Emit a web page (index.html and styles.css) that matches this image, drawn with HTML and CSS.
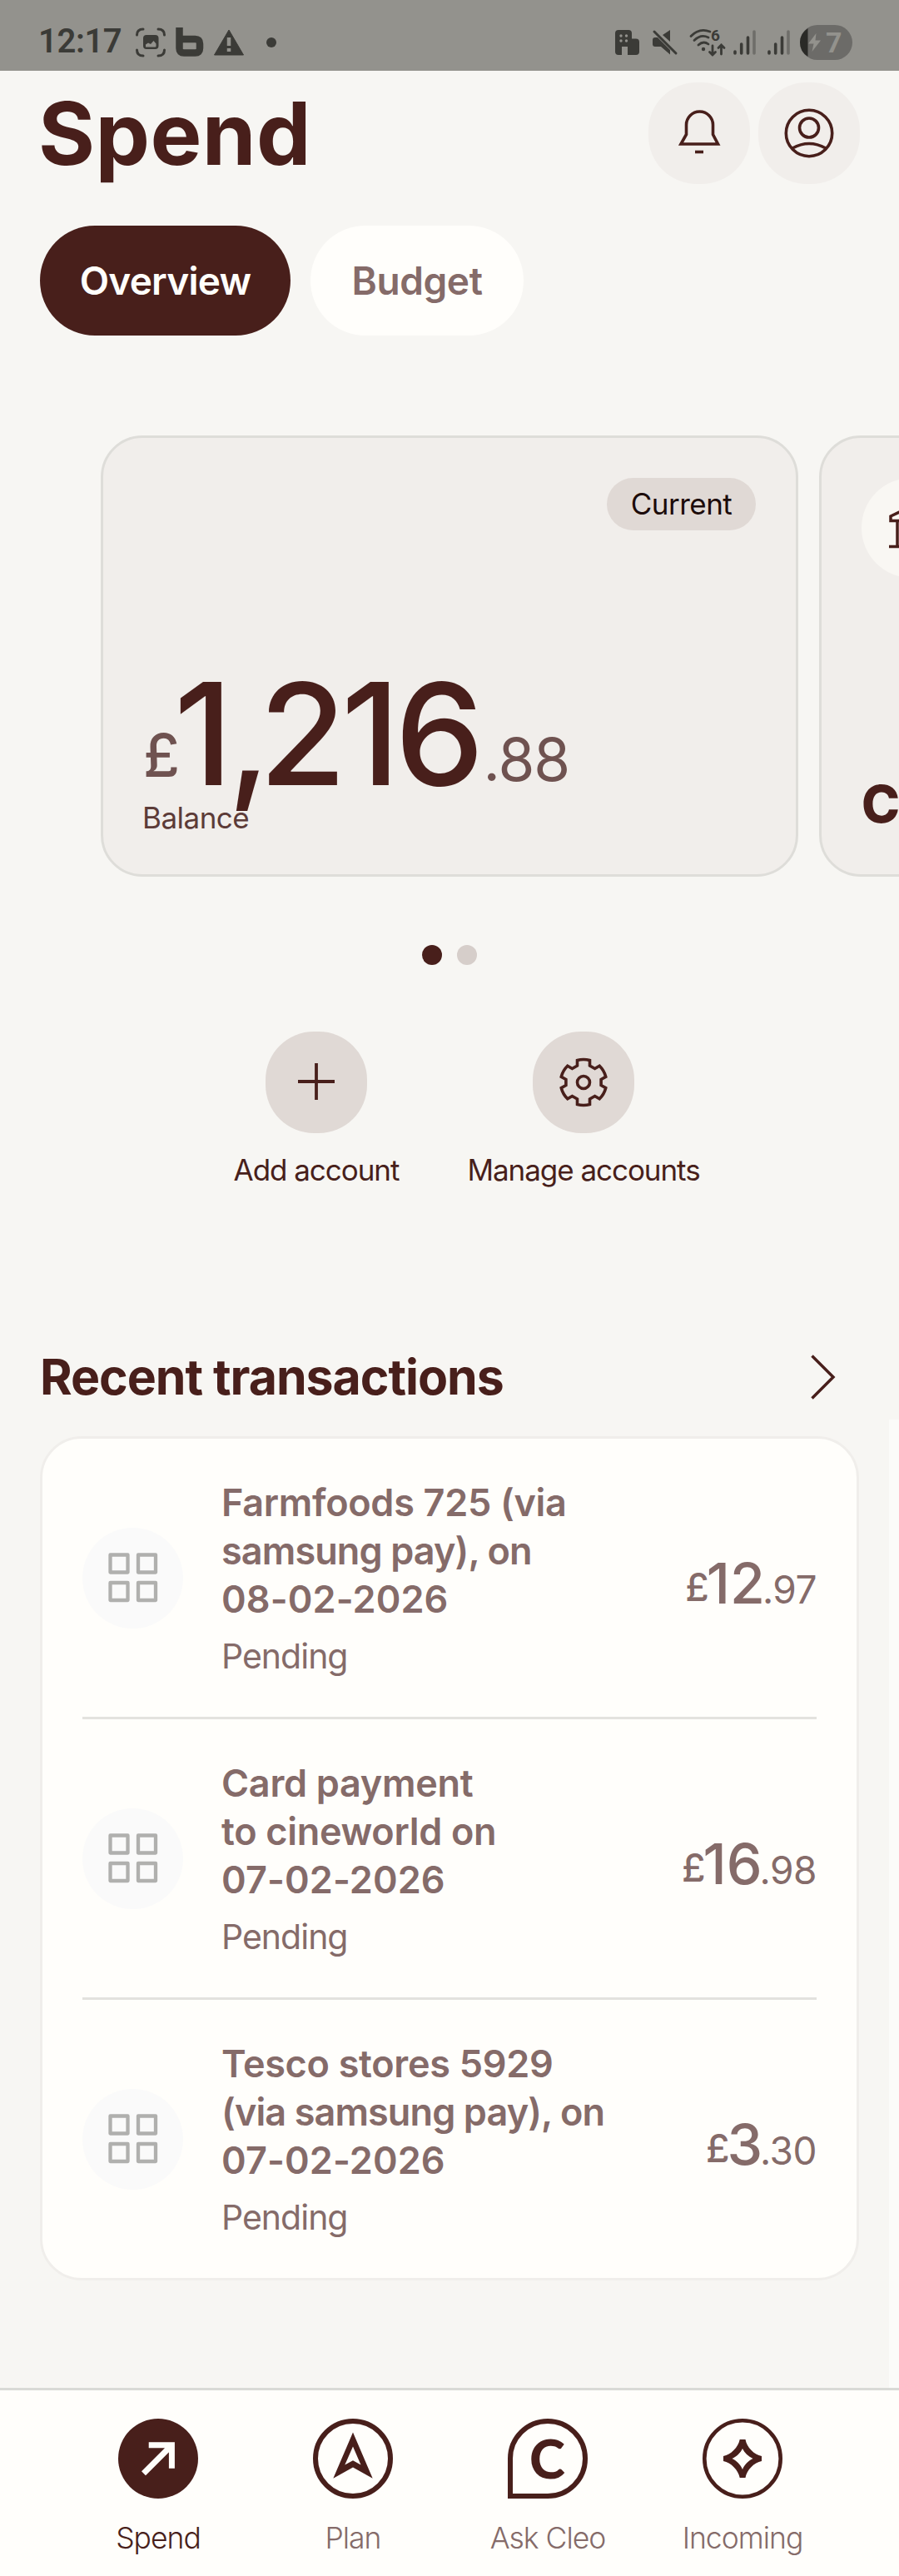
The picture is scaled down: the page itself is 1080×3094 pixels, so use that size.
FILE: index.html
```html
<!DOCTYPE html>
<html lang="en">
  <head>
    <meta charset="utf-8">
    <title>Spend</title>
    <link rel="stylesheet" href="styles.css">
  </head>
  <body>
    <div class="statusbar">
      <div class="status-left">
        <span class="clock">12:17</span>
        <svg class="capture" width="36" height="36" viewBox="0 0 36 36" fill="none" stroke="currentColor" stroke-width="3" stroke-linecap="round">
          <path d="M1.5 9Q1.5 2 9 2M27 2Q34.500 2 34.500 9M34.500 27Q34.500 34 27 34M9 34Q1.500 34 1.500 27"/>
          <rect x="9" y="9" width="18.500" height="17" rx="4" fill="currentColor" stroke="none"/>
          <path d="M12 23.500V20.500L15 18.500L18 20L21.500 16L24.500 19.500V22.500Q24.500 23.500 23.500 23.500Z" fill="#93928d" stroke="none"/>
        </svg>
        <svg class="brand" width="34" height="36" viewBox="0 0 34 36" fill="none" stroke="currentColor" stroke-width="8.500">
          <path d="M4.500 0V25Q4.500 30.500 10 30.500H23.500Q29 30.500 29 25V19.500Q29 14 23.500 14H4.500"/>
        </svg>
        <svg class="alert" width="36" height="32" viewBox="0 0 36 32">
          <path d="M18 1L35.500 31H0.500Z" fill="currentColor" stroke="currentColor" stroke-linejoin="round"/>
          <path d="M18 10V20M18 23V27" stroke="#93928d" stroke-width="4.500"/>
        </svg>
        <span class="more"></span>
      </div>
      <div class="status-right">
        <svg class="office" width="29" height="30" viewBox="0 0 29 30">
          <path d="M4 0H16Q20 0 20 4V10.500H25Q29 10.500 29 14.500V26Q29 30 25 30H15V20H8V30H4Q0 30 0 26V4Q0 0 4 0Z" fill="currentColor"/>
          <g fill="#93928d"><circle cx="7" cy="7" r="1.700"/><circle cx="13.500" cy="7" r="1.700"/><circle cx="7" cy="13" r="1.700"/><circle cx="13.500" cy="13" r="1.700"/></g>
        </svg>
        <svg class="mute" width="30" height="30" viewBox="0 0 30 30" fill="currentColor">
          <path d="M0 12Q0 9 3 9H6L21 24V29.500L10 20H3Q0 20 0 17ZM12 6L21 0V14Z"/>
          <path d="M2 2L28 28" fill="none" stroke="currentColor" stroke-width="3" stroke-linecap="round"/>
        </svg>
        <svg class="wifi" width="44" height="34" viewBox="0 0 44 34" fill="none" stroke="currentColor" stroke-width="2.800" stroke-linecap="round">
          <path d="M2 9.500Q12 -1 25 4M6 14.500Q14 6.500 23 11M11 20Q17 14.500 23 19"/>
          <path d="M28 21V32M24.500 28.500L28 32L31.500 28.500M38.500 31V20M35 23.500L38.500 20L42 23.500"/>
          <circle cx="17" cy="25" r="2.200" fill="currentColor" stroke="none"/>
          <text x="26" y="15" font-size="19" font-weight="700" font-family="Roboto, sans-serif" fill="currentColor" stroke="none">6</text>
        </svg>
        <svg class="signal" width="28" height="30" viewBox="0 0 28 30" stroke="currentColor" stroke-width="3.600" stroke-linecap="round">
          <path d="M2 26V28M9.700 17V28M17.500 9V28"/><path d="M25 2V28" opacity=".4"/>
        </svg>
        <svg class="signal" width="28" height="30" viewBox="0 0 28 30" stroke="currentColor" stroke-width="3.600" stroke-linecap="round">
          <path d="M2 26V28M9.700 17V28M17.500 9V28"/><path d="M25 2V28" opacity=".4"/>
        </svg>
        <svg class="battery" width="63" height="42" viewBox="0 0 63 42">
          <rect width="63" height="42" rx="21" fill="#6c6b68"/>
          <path d="M9.500 4V38Q0 32 0 21Q0 10 9.500 4Z" fill="#2a2a27"/>
          <path d="M19.500 10L10 22.500H16.500L14.500 32L25 18.500H18.500Z" fill="#93928d"/>
          <text x="31" y="32.500" font-size="34" font-weight="700" font-family="Roboto, sans-serif" fill="#93928d">7</text>
        </svg>
      </div>
    </div>

    <div class="header">
      <h1>Spend</h1>
      <div class="header-buttons">
        <div class="round">
          <svg width="60" height="60" viewBox="0 0 60 60" fill="none" stroke="currentColor" stroke-width="3.600">
            <path d="M14 30V19A16 16 0 0 1 46 19V30.500L52 42H7.500L14 30.500Z" transform="translate(0.500 1)"/>
            <path d="M25 52.500H35"/>
          </svg>
        </div>
        <div class="round">
          <svg width="60" height="60" viewBox="0 0 60 60" fill="none" stroke="currentColor" stroke-width="3.600">
            <circle cx="30" cy="30" r="27.700"/><circle cx="30" cy="23.500" r="11.500"/><path d="M10 48Q30 37 50 48"/>
          </svg>
        </div>
      </div>
    </div>

    <div class="tabs">
      <div class="tab active">Overview</div>
      <div class="tab">Budget</div>
    </div>

    <div class="accounts">
      <div class="account">
        <span class="tag">Current</span>
        <div>
          <div class="balance"><span class="currency">£</span><span class="whole">1<span class="comma">,</span>216</span><span class="pence">.88</span></div>
          <div class="balance-label">Balance</div>
        </div>
      </div>
      <div class="account next">
        <div class="bank">
          <svg width="120" height="120" viewBox="0 0 120 120" fill="none" stroke="currentColor" stroke-width="3.500">
            <path d="M35 51.500V46L60 34L85 46V51.500ZM43 52V82M54 52V82M66 52V82M77 52V82M33 82.500H87"/>
          </svg>
        </div>
        <div class="next-title">Co</div>
      </div>
    </div>

    <div class="dots"><span class="dot on"></span><span class="dot"></span></div>

    <div class="actions">
      <div class="action add">
        <div class="round dark">
          <svg width="60" height="60" viewBox="-30 -30 60 60" stroke="currentColor" stroke-width="3.800"><path d="M-22 -1H22M0 -23V21"/></svg>
        </div>
        <div class="action-label">Add account</div>
      </div>
      <div class="action manage">
        <div class="round dark">
          <svg width="60" height="60" viewBox="-30 -30 60 60" fill="none" stroke="currentColor" stroke-width="3.600">
            <path d="M-7.500 -20V-26.500A27.500 27.500 0 0 1 7.500 -26.500V-20L13.600 -16.500L19.200 -19.700A27.500 27.500 0 0 1 26.700 -6.700L21.100 -3.500V3.500L26.700 6.700A27.500 27.500 0 0 1 19.200 19.700L13.600 16.500L7.500 20V26.500A27.500 27.500 0 0 1 -7.500 26.500V20L-13.600 16.500L-19.200 19.700A27.500 27.500 0 0 1 -26.700 6.700L-21.100 3.500V-3.500L-26.700 -6.700A27.500 27.500 0 0 1 -19.200 -19.700L-13.600 -16.500Z"/>
            <circle r="7.500"/>
          </svg>
        </div>
        <div class="action-label">Manage accounts</div>
      </div>
    </div>

    <div class="section-title">
      <h2>Recent transactions</h2>
      <svg width="30" height="54" viewBox="0 0 30 54" fill="none" stroke="currentColor" stroke-width="3.500"><path d="M1.500 1.500L27 27L1.500 52.500"/></svg>
    </div>

    <div class="transactions">
      <div class="transaction">
        <div class="category">
          <svg width="60" height="60" viewBox="0 0 60 60" fill="none" stroke="currentColor" stroke-width="4.300" stroke-linejoin="round">
            <path d="M2.500 2.500H23.500V23.500H2.500ZM36 2.500H57V23.500H36ZM2.500 36H23.500V57H2.500ZM36 36H57V57H36Z"/>
          </svg>
        </div>
        <div class="details">
          <div class="name">Farmfoods 725 (via<br><span class="tight">samsung pay), on</span><br><span class="date">08-02-2026</span></div>
          <div class="state">Pending</div>
        </div>
        <div class="amount"><span class="currency">£</span><span class="whole">12</span><span class="pence">.97</span></div>
      </div>
      <div class="transaction">
        <div class="category">
          <svg width="60" height="60" viewBox="0 0 60 60" fill="none" stroke="currentColor" stroke-width="4.300" stroke-linejoin="round">
            <path d="M2.500 2.500H23.500V23.500H2.500ZM36 2.500H57V23.500H36ZM2.500 36H23.500V57H2.500ZM36 36H57V57H36Z"/>
          </svg>
        </div>
        <div class="details">
          <div class="name">Card payment<br>to cineworld on<br><span class="date">07-02-2026</span></div>
          <div class="state">Pending</div>
        </div>
        <div class="amount"><span class="currency">£</span><span class="whole">16</span><span class="pence">.98</span></div>
      </div>
      <div class="transaction">
        <div class="category">
          <svg width="60" height="60" viewBox="0 0 60 60" fill="none" stroke="currentColor" stroke-width="4.300" stroke-linejoin="round">
            <path d="M2.500 2.500H23.500V23.500H2.500ZM36 2.500H57V23.500H36ZM2.500 36H23.500V57H2.500ZM36 36H57V57H36Z"/>
          </svg>
        </div>
        <div class="details">
          <div class="name">Tesco stores 5929<br><span class="tight">(via samsung pay), on</span><br><span class="date">07-02-2026</span></div>
          <div class="state">Pending</div>
        </div>
        <div class="amount"><span class="currency">£</span><span class="whole">3</span><span class="pence">.30</span></div>
      </div>
    </div>

    <div class="scrollbar"></div>

    <div class="nav">
      <div class="nav-item current">
        <svg width="96" height="96" viewBox="0 0 96 96" fill="none">
          <circle cx="48" cy="48" r="48" fill="#481f1b"/>
          <path d="M36.700 31.800H64.400V59.700M30.500 65.800L64 32.300" stroke="#fffefb" stroke-width="7"/>
        </svg>
        <span>Spend</span>
      </div>
      <div class="nav-item">
        <svg width="96" height="96" viewBox="0 0 96 96" fill="#481f1b">
          <circle cx="48" cy="48" r="45" fill="none" stroke="#481f1b" stroke-width="6"/>
          <path fill-rule="evenodd" d="M48 16.500L71.700 71.700L48 58.500L24.300 71.700ZM48 33.500L38.300 55.500L48 50.300L57.500 55.500Z"/>
        </svg>
        <span>Plan</span>
      </div>
      <div class="nav-item">
        <svg width="96" height="96" viewBox="0 0 96 96">
          <path d="M3 93V48A45 45 0 1 1 48 93Z" fill="none" stroke="#481f1b" stroke-width="6"/>
          <text x="47" y="71.500" text-anchor="middle" font-family="Lato, sans-serif" font-size="65" font-weight="900" fill="#481f1b">C</text>
        </svg>
        <span>Ask Cleo</span>
      </div>
      <div class="nav-item">
        <svg width="96" height="96" viewBox="0 0 96 96" fill="#481f1b">
          <circle cx="48" cy="48" r="45.700" fill="none" stroke="#481f1b" stroke-width="4.600"/>
          <path fill-rule="evenodd" d="M44.700 25H51.500C53 34 62 43.500 71 45V51C62 52.500 53 62 51.500 71H44.700C43 62 34 52.500 25 51V45C34 43.500 43 34 44.700 25ZM48 36C45.500 41 41 45.500 35.500 48C41 50.500 45.500 55 48 61C50.500 55 55 50.500 60.500 48C55 45.500 50.500 41 48 36Z"/>
        </svg>
        <span>Incoming</span>
      </div>
    </div>
  </body>
</html>
```
FILE: styles.css
```css
* {
    box-sizing: border-box;
}
body {
    margin: 0;
    width: 1080px;
    height: 3094px;
    overflow: hidden;
    background: #f7f6f3;
    color: #481f1b;
    font-family: Inter, "Liberation Sans", sans-serif;
    position: relative;
}
svg {
    display: block;
    flex: none;
    overflow: visible;
}

/* status bar */
.statusbar {
    height: 85px;
    padding: 17px 56px 0 46px;
    background: #93928d;
    color: #3b3b37;
    display: flex;
    justify-content: space-between;
}
.status-left,
.status-right {
    height: 68px;
    display: flex;
    align-items: center;
}
.clock {
    width: 117px;
    font: 600 40px/68px Roboto, sans-serif;
    letter-spacing: -.4px;
    padding-bottom: 3px;
}
.capture { margin-right: 12px; }
.brand { margin-right: 12px; }
.alert { margin-right: 27px; }
.more {
    width: 12px;
    height: 12px;
    border-radius: 50%;
    background: #3b3b37;
}
.office { margin-right: 16px; }
.mute { margin-right: 14px; }
.wifi { margin-right: 9px; }
.signal { margin-right: 13px; }
.signal + .battery { margin-left: -2px; }

/* header */
.header {
    padding: 14px 47px 0 48px;
    display: flex;
    justify-content: space-between;
}
h1 {
    margin: 1px 0 0;
    font-size: 104px;
    font-weight: 700;
    line-height: 121px;
    letter-spacing: .4px;
    text-indent: -2px;
}
.header-buttons {
    display: flex;
    gap: 10px;
}
.round {
    width: 122px;
    height: 122px;
    border-radius: 58px;
    background: #f1eeeb;
    display: flex;
    align-items: center;
    justify-content: center;
}
.round.dark {
    background: #e0d9d5;
}

/* tabs */
.tabs {
    margin: 50px 0 0 48px;
    display: flex;
    gap: 24px;
}
.tab {
    height: 132px;
    width: 256px;
    border-radius: 66px;
    background: #fffefb;
    color: #856b69;
    font-size: 46px;
    font-weight: 600;
    line-height: 132px;
    letter-spacing: -.4px;
    text-align: center;
}
.tab.active {
    width: 301px;
    background: #481f1b;
    color: #fffefb;
    letter-spacing: -.8px;
}

/* account cards */
.accounts {
    margin-top: 120px;
    padding-left: 121px;
    display: flex;
    gap: 25px;
    overflow: hidden;
}
.account {
    flex: none;
    width: 838px;
    height: 530px;
    padding: 48px;
    border: 3px solid #deddd9;
    border-radius: 50px;
    background: #f1eeeb;
    display: flex;
    flex-direction: column;
    justify-content: space-between;
}
.tag {
    align-self: flex-end;
    width: 179px;
    height: 63px;
    border-radius: 32px;
    background: #e0d9d5;
    color: #1c0b0a;
    font-size: 35px;
    line-height: 63px;
    letter-spacing: -.5px;
    text-align: center;
}
.balance {
    height: 162px;
    font-size: 170px;
    font-weight: 500;
    line-height: 162px;
    white-space: nowrap;
}
.balance .currency,
.balance .pence {
    font-size: 71px;
    line-height: 1;
    color: #6f5250;
}
.balance .currency {
    vertical-align: 10px;
}
.balance .whole {
    margin-left: -7px;
    letter-spacing: -6px;
}
.balance .comma {
    letter-spacing: -14px;
}
.balance .pence {
    margin-left: 5px;
    font-weight: 400;
    letter-spacing: -1px;
    vertical-align: 5px;
}
.balance-label {
    font-size: 35px;
    line-height: 40px;
    letter-spacing: -.5px;
    text-indent: -1px;
    color: #5c3b38;
}
.bank {
    width: 120px;
    height: 120px;
    border-radius: 50%;
    background: #f9f7f3;
}
.next-title {
    font-size: 62px;
    font-weight: 800;
    line-height: 72px;
    letter-spacing: -1px;
}

.dots {
    margin-top: 82px;
    display: flex;
    justify-content: center;
    gap: 18px;
}
.dot {
    width: 24px;
    height: 24px;
    border-radius: 50%;
    background: #d6ceca;
}
.dot.on {
    background: #481f1b;
}

.actions {
    margin: 80px 0 0 278px;
    display: flex;
    gap: 78px;
}
.action {
    display: flex;
    flex-direction: column;
    align-items: center;
}
.add { width: 204px; }
.manage { width: 282px; }
.action-label {
    margin-top: 20px;
    font-size: 35px;
    line-height: 48px;
    letter-spacing: -1.050px;
    white-space: nowrap;
}

/* transactions */
.section-title {
    margin: 185px 76px 0 48px;
    height: 80px;
    display: flex;
    align-items: center;
    justify-content: space-between;
}
h2 {
    margin: 0;
    font-size: 59px;
    font-weight: 700;
    line-height: 80px;
    letter-spacing: -1.050px;
}
.transactions {
    margin: 31px 48px 0;
    padding: 0 48px;
    border: 3px solid #f0eeeb;
    border-radius: 50px;
    background: #fffefb;
    color: #856b69;
}
.transaction {
    height: 337px;
    border-bottom: 3px solid #e3e2de;
    display: flex;
    align-items: center;
}
.transaction:last-child {
    height: 334px;
    border-bottom: 0;
}
.category {
    width: 121px;
    height: 121px;
    border-radius: 50%;
    background: #fafafa;
    color: #b0b0ae;
    display: flex;
    align-items: center;
    justify-content: center;
}
.details {
    flex: 1;
    padding: 4px 0 0 46px;
}
.name {
    font-size: 45px;
    font-weight: 600;
    line-height: 58px;
    letter-spacing: -.3px;
    white-space: nowrap;
}
.tight {
    letter-spacing: -.9px;
}
.date {
    letter-spacing: .1px;
}
.state {
    margin-top: 10px;
    font-size: 41px;
    line-height: 58px;
    letter-spacing: -1px;
}
.amount {
    padding-top: 12px;
    font-size: 68px;
    font-weight: 500;
    line-height: 80px;
    white-space: nowrap;
}
.amount .currency,
.amount .pence {
    font-size: 46px;
    line-height: 1;
}
.amount .currency {
    vertical-align: 3px;
}
.amount .whole {
    margin-left: -3px;
}
.amount .pence {
    margin-left: -3px;
    font-weight: 400;
    letter-spacing: -.5px;
}

.scrollbar {
    position: absolute;
    top: 1705px;
    right: 0;
    width: 12px;
    height: 1163px;
    background: #fbfbf9;
}

/* bottom navigation */
.nav {
    margin-top: 129px;
    height: 226px;
    padding: 34px 71px 0 73px;
    border-top: 3px solid #d9dad6;
    background: #fffefb;
    color: #856b69;
    display: flex;
}
.nav-item {
    width: 234px;
    display: flex;
    flex-direction: column;
    align-items: center;
    font-size: 35.500px;
    font-weight: 300;
    letter-spacing: -1px;
}
.nav-item span {
    margin-top: 24px;
    line-height: 48px;
}
.nav-item.current {
    color: #481f1b;
}
```
